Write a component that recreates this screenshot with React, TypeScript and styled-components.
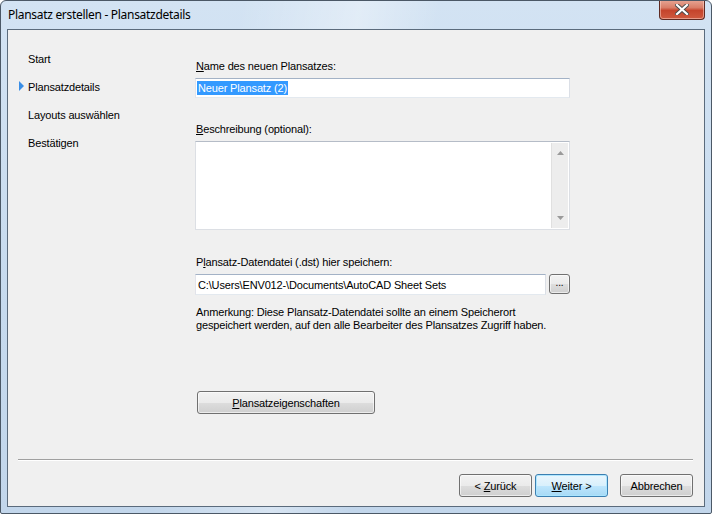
import styled, { createGlobalStyle } from 'styled-components';

const Global = createGlobalStyle`
  html, body { margin: 0; padding: 0; }
  body {
    width: 712px;
    height: 514px;
    overflow: hidden;
    font-family: "Liberation Sans", Arial, sans-serif;
    font-size: 11px;
    letter-spacing: -0.15px;
    color: #000;
  }
`;

/* fenster mit aero-rahmen */
const Window = styled.div`
  box-sizing: border-box;
  width: 712px;
  height: 514px;
  display: flex;
  flex-direction: column;
  border: 1px solid #4b5866;
  border-radius: 6px 6px 2px 2px;
  background:
    linear-gradient(100deg, transparent 30%, rgba(255,255,255,0.35) 45%, transparent 55%),
    linear-gradient(180deg, #d3e3f3 0%, #c6daee 60%, #c2d6eb 100%);
  overflow: hidden;
`;

const TitleBar = styled.div`
  height: 28px;
  display: flex;
  align-items: flex-start;
  justify-content: space-between;
  padding-left: 7px;
`;

const Title = styled.div`
  font-family: "Noto Sans", "Open Sans", sans-serif;
  font-size: 12px;
  letter-spacing: -0.3px;
  line-height: 16px;
  padding-top: 6px;
  color: #000;
`;

const CloseButton = styled.div`
  box-sizing: border-box;
  width: 46px;
  height: 20px;
  margin-right: 6px;
  margin-top: -1px;
  border: 1px solid #5e2a22;
  border-top: none;
  border-radius: 0 0 4px 4px;
  background: linear-gradient(180deg, #e7a695 0%, #d97e68 40%, #c5442c 55%, #cf5a3f 100%);
  box-shadow: inset 0 0 0 1px rgba(255, 220, 210, 0.5);
  display: flex;
  align-items: center;
  justify-content: center;
`;

const Client = styled.div`
  flex: 1;
  margin: 0 6px 6px 6px;
  border: 1px solid #5b6b7c;
  background: #f0f0f0;
  display: flex;
  flex-direction: column;
`;

const Body = styled.div`
  height: 429px;
  display: flex;
`;

const Nav = styled.div`
  width: 187px;
  padding-top: 22px;
  display: flex;
  flex-direction: column;
`;

const NavItem = styled.div<{ $active?: boolean }>`
  position: relative;
  height: 28px;
  line-height: 14px;
  padding-left: 20px;

  &::before {
    content: "";
    display: ${p => (p.$active ? 'block' : 'none')};
    position: absolute;
    left: 11px;
    top: 1px;
    border-left: 5px solid #3a8ee6;
    border-top: 5px solid transparent;
    border-bottom: 5px solid transparent;
  }
`;

const Form = styled.div`
  width: 375px;
  padding-top: 29px;
  display: flex;
  flex-direction: column;
`;

const Label = styled.div<{ $gap?: number }>`
  line-height: 14px;
  padding-left: 1px;
  margin-top: ${p => p.$gap ?? 0}px;
  margin-bottom: 5px;

  u { text-decoration: underline; text-underline-offset: 1px; }
`;

const TextBox = styled.div`
  box-sizing: border-box;
  height: 20px;
  background: #fff;
  border: 1px solid #abadb3;
  border-top-color: #a3b2c6;
  border-left-color: #e2e3ea;
  border-right-color: #dbdfe6;
  border-bottom-color: #e3e9ef;
  padding: 2px 1px;
  line-height: 14px;
  white-space: nowrap;
  overflow: hidden;
`;

const Selected = styled.span`
  background: #3399ff;
  color: #fff;
  padding: 1px;
`;

const MemoBox = styled.div`
  box-sizing: border-box;
  height: 89px;
  background: #fff;
  border: 1px solid #dcdfe4;
  border-top-color: #b5bcc7;
  display: flex;
  justify-content: flex-end;
  padding: 1px;
`;

const ScrollBar = styled.div`
  width: 16px;
  background: #ededed;
  border-left: 1px solid #e0e0e0;
  display: flex;
  flex-direction: column;
  justify-content: space-between;
  align-items: center;
  padding: 8px 0;
`;

const PathRow = styled.div`
  display: flex;
  gap: 3px;
  height: 21px;

  ${TextBox} {
    flex: 1;
    height: 21px;
    padding-top: 3px;
    padding-left: 2px;
  }
`;

const SmallButton = styled.div`
  box-sizing: border-box;
  width: 21px;
  height: 20px;
  border: 1px solid #707070;
  border-radius: 3px;
  background: linear-gradient(180deg, #f2f2f2 0%, #ebebeb 50%, #dddddd 51%, #cfcfcf 100%);
  box-shadow: inset 0 0 0 1px rgba(255,255,255,0.6);
  text-align: center;
  line-height: 16px;
  font-size: 10px;
`;

const Note = styled.div`
  margin-top: 11px;
  line-height: 13px;
  padding-left: 1px;
`;

const Button = styled.div<{ $default?: boolean; $width: number }>`
  box-sizing: border-box;
  width: ${p => p.$width}px;
  height: 23px;
  border: 1px solid ${p => (p.$default ? '#3c7fb1' : '#707070')};
  border-radius: 3px;
  background: ${p =>
    p.$default
      ? 'linear-gradient(180deg, #eaf6fd 0%, #d9f0fc 50%, #bee6fd 51%, #a7d9f5 100%)'
      : 'linear-gradient(180deg, #f2f2f2 0%, #ebebeb 50%, #dddddd 51%, #cfcfcf 100%)'};
  box-shadow: inset 0 0 0 1px ${p => (p.$default ? 'rgba(170,230,255,0.9)' : 'rgba(255,255,255,0.6)')};
  display: flex;
  align-items: center;
  justify-content: center;
  line-height: 14px;

  u { text-decoration: underline; text-underline-offset: 1px; }
`;

const PropsButton = styled(Button)`
  margin-top: 59px;
  margin-left: 2px;
`;

const Separator = styled.div`
  margin: 0 11px 0 10px;
  height: 1px;
  background: #a0a0a0;
  border-bottom: 1px solid #ffffff;
`;

const ButtonRow = styled.div`
  display: flex;
  justify-content: flex-end;
  gap: 3px;
  padding: 13px 11px 0 0;

  & > :last-child { margin-left: 9px; }
`;

const Arrow = ({ up }: { up?: boolean }) => (
  <svg width="7" height="4" viewBox="0 0 7 4">
    <path d={up ? 'M0 4 L3.5 0 L7 4 Z' : 'M0 0 L3.5 4 L7 0 Z'} fill="#9a9a9a" />
  </svg>
);

export default function App() {
  return (
    <>
      <Global />
      <Window>
        <TitleBar>
          <Title>Plansatz erstellen - Plansatzdetails</Title>
          <CloseButton>
            <svg width="14" height="11" viewBox="0 0 14 11">
              <path d="M2 1 L12 10 M12 1 L2 10" stroke="#4a4a4a" strokeWidth="4" strokeLinecap="square" />
              <path d="M2 1 L12 10 M12 1 L2 10" stroke="#ffffff" strokeWidth="2.2" strokeLinecap="square" />
            </svg>
          </CloseButton>
        </TitleBar>
        <Client>
          <Body>
            <Nav>
              <NavItem>Start</NavItem>
              <NavItem $active>Plansatzdetails</NavItem>
              <NavItem>Layouts auswählen</NavItem>
              <NavItem>Bestätigen</NavItem>
            </Nav>
            <Form>
              <Label>
                <u>N</u>ame des neuen Plansatzes:
              </Label>
              <TextBox>
                <Selected>Neuer Plansatz (2)</Selected>
              </TextBox>
              <Label $gap={24}>
                <u>B</u>eschreibung (optional):
              </Label>
              <MemoBox>
                <ScrollBar>
                  <Arrow up />
                  <Arrow />
                </ScrollBar>
              </MemoBox>
              <Label $gap={25}>
                P<u>l</u>ansatz-Datendatei (.dst) hier speichern:
              </Label>
              <PathRow>
                <TextBox>C:\Users\ENV012-\Documents\AutoCAD Sheet Sets</TextBox>
                <SmallButton>...</SmallButton>
              </PathRow>
              <Note>
                Anmerkung: Diese Plansatz-Datendatei sollte an einem Speicherort
                <br />
                gespeichert werden, auf den alle Bearbeiter des Plansatzes Zugriff haben.
              </Note>
              <PropsButton $width={178}>
                <span>
                  <u>P</u>lansatzeigenschaften
                </span>
              </PropsButton>
            </Form>
          </Body>
          <Separator />
          <ButtonRow>
            <Button $width={73}>
              <span>
                &lt; <u>Z</u>urück
              </span>
            </Button>
            <Button $width={73} $default>
              <span>
                <u>W</u>eiter &gt;
              </span>
            </Button>
            <Button $width={73}>Abbrechen</Button>
          </ButtonRow>
        </Client>
      </Window>
    </>
  );
}
